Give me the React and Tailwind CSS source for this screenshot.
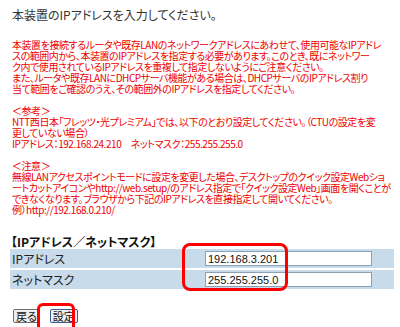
import React from "react";

const jp = "font-['Noto_Sans_CJK_JP',sans-serif] [font-feature-settings:'palt']";

const Lines = ({ lines }) => (
  <div>
    {lines.map((l, i) => (
      <div key={i} className="whitespace-nowrap h-[11px] leading-[11px]">{l}</div>
    ))}
  </div>
);

const App = () => (
  <div className={`relative w-[400px] h-[327px] bg-white overflow-hidden ${jp}`}>
    <div className="pl-[12px] pt-[8px] text-[12px] leading-[14px] text-[#333]">
      本装置のIPアドレスを入力してください。
    </div>

    <div className="pl-[12px] pt-[17px] text-[10px] text-[#e00] tracking-[-0.45px] flex flex-col gap-[11px]">
      <Lines
        lines={[
          "本装置を接続するルータや既存LANのネットワークアドレスにあわせて、使用可能なIPアドレ",
          "スの範囲内から、本装置のIPアドレスを指定する必要があります。このとき、既にネットワー",
          "ク内で使用されているIPアドレスを重複して指定しないようにご注意ください。",
          "また、ルータや既存LANにDHCPサーバ機能がある場合は、DHCPサーバのIPアドレス割り",
          "当て範囲をご確認のうえ、その範囲外のIPアドレスを指定してください。",
        ]}
      />
      <Lines
        lines={[
          "＜参考＞",
          "NTT西日本「フレッツ・光プレミアム」では、以下のとおり設定してください。（CTUの設定を変",
          "更していない場合）",
          "IPアドレス：192.168.24.210　ネットマスク：255.255.255.0",
        ]}
      />
      <Lines
        lines={[
          "＜注意＞",
          "無線LANアクセスポイントモードに設定を変更した場合、デスクトップのクイック設定Webショ",
          "ートカットアイコンやhttp://web.setup/のアドレス指定で「クイック設定Web」画面を開くことが",
          "できなくなります。ブラウザから下記のIPアドレスを直接指定して開いてください。",
          "例）http://192.168.0.210/",
        ]}
      />
    </div>

    <div className="pl-[10px] pr-[6px] pt-[20px]">
      <div className="text-[12px] leading-[14px] font-bold text-[#111] pl-[1px]">
        【IPアドレス／ネットマスク】
      </div>
      <div className="flex flex-col gap-[2px]">
        {[
          ["IPアドレス", "192.168.3.201"],
          ["ネットマスク", "255.255.255.0"],
        ].map(([label, value]) => (
          <div key={label} className="flex items-center h-[19px] bg-[#c8dbea]">
            <div className="w-[195px] pl-[2px] text-[12px] leading-[14px] text-[#222]">{label}</div>
            <div className="w-[167px] h-[15px] bg-white border border-[#8aa0b4] flex items-center pl-[2px] text-[11px] leading-[12px] text-[#111] font-['Liberation_Sans',sans-serif]">
              {value}
            </div>
          </div>
        ))}
      </div>
    </div>

    <div className="pl-[13px] pt-[20px] flex gap-[10px] text-[11px] leading-[11px]">
      <div className="h-[14px] px-[2px] flex items-center bg-[#eeeeee] border border-[#707070] rounded-[2px] text-[#111]">
        戻る
      </div>
      <div className="h-[14px] px-[2px] flex items-center bg-[#eef2f8] border border-[#3c5a96] rounded-[2px] text-[#111]">
        設定
      </div>
    </div>

    <div className="absolute left-[182px] top-[243px] w-[106px] h-[48px] border-[3px] border-[#f00] rounded-[8px]" />
    <div className="absolute left-[37px] top-[303px] w-[38px] h-[30px] border-[3px] border-[#f00] rounded-[6px]" />
  </div>
);

export default App;
